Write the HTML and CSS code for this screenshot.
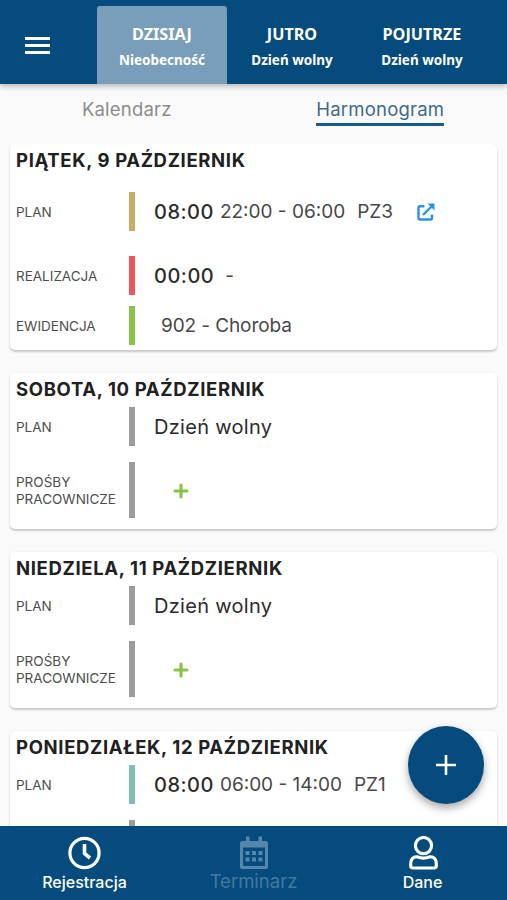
FILE: index.html
```html
<!DOCTYPE html>
<html lang="pl">
<head>
    <meta charset="utf-8">
    <title>Harmonogram</title>
    <link rel="stylesheet" href="styles.css">
</head>
<body>
    <header class="top-bar">
        <div class="menu-button">
            <span></span>
            <span></span>
            <span></span>
        </div>
        <div class="day active">
            <div class="day-name">DZISIAJ</div>
            <div class="day-info">Nieobecność</div>
        </div>
        <div class="day">
            <div class="day-name">JUTRO</div>
            <div class="day-info">Dzień wolny</div>
        </div>
        <div class="day">
            <div class="day-name">POJUTRZE</div>
            <div class="day-info">Dzień wolny</div>
        </div>
    </header>

    <nav class="tabs">
        <div class="tab"><span class="tab-calendar">Kalendarz</span></div>
        <div class="tab"><span class="tab-schedule">Harmonogram</span></div>
    </nav>

    <main class="list">
        <section class="card card-today">
            <h2>PIĄTEK, 9 PAŹDZIERNIK</h2>
            <div class="row">
                <div class="label">PLAN</div>
                <div class="bar sand"></div>
                <div class="value"><span class="hours">08:00</span><span class="range">22:00 - 06:00</span><span class="code">PZ3</span>
                    <svg class="link-icon" viewBox="0 0 18 18" width="18" height="18">
                        <path d="M7.5 3.2H3Q1.5 3.2 1.5 4.7V15Q1.5 16.5 3 16.5H13.5Q15 16.5 15 15V11.5" />
                        <path d="M6 12L15 3" />
                        <path class="arrow" d="M10.5 0.5H17.5V7.5Z" />
                    </svg>
                </div>
            </div>
            <div class="row row-done">
                <div class="label">REALIZACJA</div>
                <div class="bar red"></div>
                <div class="value"><span class="hours">00:00</span><span class="dash">-</span></div>
            </div>
            <div class="row row-record">
                <div class="label">EWIDENCJA</div>
                <div class="bar green"></div>
                <div class="value"><span class="record">902 - Choroba</span></div>
            </div>
        </section>

        <section class="card">
            <h2>SOBOTA, 10 PAŹDZIERNIK</h2>
            <div class="row">
                <div class="label">PLAN</div>
                <div class="bar"></div>
                <div class="value"><span class="free">Dzień wolny</span></div>
            </div>
            <div class="row row-requests">
                <div class="label">PROŚBY<br>PRACOWNICZE</div>
                <div class="bar"></div>
                <div class="value">
                    <svg class="add-icon" viewBox="0 0 16 16" width="16" height="16"><path d="M8 2V14M2 8H14" /></svg>
                </div>
            </div>
        </section>

        <section class="card">
            <h2>NIEDZIELA, 11 PAŹDZIERNIK</h2>
            <div class="row">
                <div class="label">PLAN</div>
                <div class="bar"></div>
                <div class="value"><span class="free">Dzień wolny</span></div>
            </div>
            <div class="row row-requests">
                <div class="label">PROŚBY<br>PRACOWNICZE</div>
                <div class="bar"></div>
                <div class="value">
                    <svg class="add-icon" viewBox="0 0 16 16" width="16" height="16"><path d="M8 2V14M2 8H14" /></svg>
                </div>
            </div>
        </section>

        <section class="card">
            <h2>PONIEDZIAŁEK, 12 PAŹDZIERNIK</h2>
            <div class="row">
                <div class="label">PLAN</div>
                <div class="bar teal"></div>
                <div class="value"><span class="hours">08:00</span><span class="range">06:00 - 14:00</span><span class="code">PZ1</span></div>
            </div>
            <div class="row row-requests">
                <div class="label"></div>
                <div class="bar"></div>
            </div>
        </section>
    </main>

    <button class="fab" type="button">
        <svg viewBox="0 0 20 20" width="20" height="20"><path d="M10 0V20M0 10H20" /></svg>
    </button>

    <footer class="bottom-bar">
        <div class="item">
            <svg viewBox="0 0 34 34" width="34" height="34">
                <circle cx="16.500" cy="17" r="14.600" />
                <path class="hands" d="M16.500 8V17.500L22 22" />
            </svg>
            <span>Rejestracja</span>
        </div>
        <div class="item current">
            <svg viewBox="0 0 34 34" width="34" height="34">
                <path class="solid" d="M9 0.500H12.500V5H21.500V0.500H25V5H28.500Q31 5 31 7.500V30.500Q31 33 28.500 33H5.500Q3 33 3 30.500V7.500Q3 5 5.500 5H9ZM6 11.500V30H28V11.500Z" />
                <path class="solid" d="M8.500 15H12.500V19H8.500ZM15 15H19V19H15ZM21.500 15H25.500V19H21.500ZM8.500 21.500H12.500V25.500H8.500ZM15 21.500H19V25.500H15ZM21.500 21.500H25.500V25.500H21.500Z" />
            </svg>
            <span>Terminarz</span>
        </div>
        <div class="item">
            <svg viewBox="0 0 34 34" width="34" height="34">
                <circle cx="17.5" cy="9.6" r="8.1" />
                <path d="M11 20.8Q17.5 23.5 24 20.8C28 20.5 30.3 23.5 30.3 27.5V29.8Q30.3 32 28 32H7Q4.7 32 4.7 29.8V27.5C4.7 23.5 7 20.5 11 20.8Z" />
            </svg>
            <span>Dane</span>
        </div>
    </footer>
</body>
</html>
```
FILE: styles.css
```css
* {
    box-sizing: border-box;
}

body {
    margin: 0;
    height: 900px;
    display: flex;
    flex-direction: column;
    overflow: hidden;
    position: relative;
    background-color: #fafafa;
    font-family: Inter, "Liberation Sans", sans-serif;
    color: #212121;
}

.top-bar {
    height: 84px;
    flex-shrink: 0;
    display: flex;
    padding-top: 6px;
    background-color: #064b7d;
    box-shadow: 0 2px 6px rgba(0, 0, 0, 0.3);
    color: #fff;
    font-family: "Noto Sans", sans-serif;
    font-weight: bold;
}

.menu-button {
    width: 97px;
    padding: 31px 0 0 25px;
}

.menu-button span {
    display: block;
    width: 25px;
    height: 3px;
    margin-bottom: 4px;
    background-color: #fff;
}

.day {
    width: 130px;
    padding-top: 16px;
    border-radius: 3px 3px 0 0;
    text-align: center;
}

.day.active {
    background-color: #7a9eba;
}

.day-name {
    height: 24px;
    line-height: 24px;
    font-size: 16.2px;
}

.day-info {
    height: 28px;
    line-height: 28px;
    font-size: 13.5px;
}

.tabs {
    height: 60px;
    flex-shrink: 0;
    display: flex;
    font-size: 18.5px;
}

.tab {
    width: 50%;
    text-align: center;
}

.tab span {
    display: inline-block;
    height: 42px;
    line-height: 51px;
    letter-spacing: 0.2px;
}

.tab-calendar {
    color: #8c8c8c;
}

.tab-schedule {
    color: #3f6a8a;
    border-bottom: 3px solid #1c5a86;
}

.list {
    flex: 1;
    min-height: 0;
    padding: 0 10px;
    overflow: hidden;
}

.card {
    height: 156px;
    margin-bottom: 23px;
    padding-left: 6px;
    background-color: #fff;
    border-radius: 5px;
    box-shadow: 0 2px 2px rgba(0, 0, 0, 0.18), 0 0 2px rgba(0, 0, 0, 0.08);
}

.card-today {
    height: 206px;
}

.card h2 {
    height: 34px;
    margin: 0;
    line-height: 32px;
    font-size: 18.5px;
    font-weight: 650;
    letter-spacing: 0.65px;
    white-space: nowrap;
}

.card-today h2 {
    margin-bottom: 14px;
}

.row {
    height: 39px;
    display: flex;
    align-items: center;
}

.row-done {
    margin-top: 25px;
}

.row-record {
    margin-top: 11px;
}

.row-requests {
    height: 56px;
    margin-top: 16px;
}

.label {
    width: 113px;
    padding-top: 2px;
    font-size: 13.5px;
    line-height: 17px;
    color: #4d4d4d;
}

.bar {
    width: 6px;
    height: 100%;
    background-color: #9b9b9b;
}

.bar.sand {
    background-color: #c9ad66;
}

.bar.red {
    background-color: #f0555a;
}

.bar.green {
    background-color: #8bc34a;
}

.bar.teal {
    background-color: #80bdb2;
}

.value {
    display: flex;
    align-items: center;
    padding-left: 19px;
    font-size: 19px;
    white-space: pre;
    color: #484848;
}

.hours,
.free {
    font-size: 20px;
    color: #2c2c2c;
    letter-spacing: 0.3px;
}

.hours {
    font-weight: 450;
    letter-spacing: 0.5px;
}

.range {
    margin-left: 6px;
}

.code {
    margin-left: 12px;
}

.dash {
    margin-left: 11px;
}

.record {
    margin-left: 7px;
    letter-spacing: -0.1px;
}

.link-icon {
    margin-left: 24px;
    fill: none;
    stroke: #2b91e0;
    stroke-width: 2.4;
}

.link-icon .arrow {
    fill: #2b91e0;
    stroke: none;
}

.add-icon {
    margin-left: 19px;
    margin-top: 2px;
    stroke: #8bc34a;
    stroke-width: 3.2;
    stroke-linecap: round;
}

.fab {
    position: absolute;
    left: 408px;
    top: 726px;
    width: 76px;
    height: 78px;
    display: flex;
    align-items: center;
    justify-content: center;
    padding: 0;
    border: none;
    border-radius: 50%;
    background-color: #064b7d;
    box-shadow: 0 4px 8px rgba(0, 0, 0, 0.35);
}

.fab svg {
    stroke: #fff;
    stroke-width: 2.6;
}

.bottom-bar {
    height: 74px;
    flex-shrink: 0;
    display: flex;
    background-color: #064b7d;
    color: #fff;
}

.item {
    flex: 1;
    display: flex;
    flex-direction: column;
    align-items: center;
    padding-top: 10px;
    font-size: 16px;
    font-weight: 500;
}

.item svg {
    fill: none;
    stroke: #fff;
    stroke-width: 3.2;
}

.item .hands {
    stroke-width: 3.6;
}

.item span {
    line-height: 25px;
}

.item.current {
    color: #4379a0;
    font-size: 18.5px;
    font-weight: 400;
}

.item.current span {
    line-height: 22px;
}

.item .solid {
    fill: #5587ad;
    fill-rule: evenodd;
    stroke: none;
}
```
